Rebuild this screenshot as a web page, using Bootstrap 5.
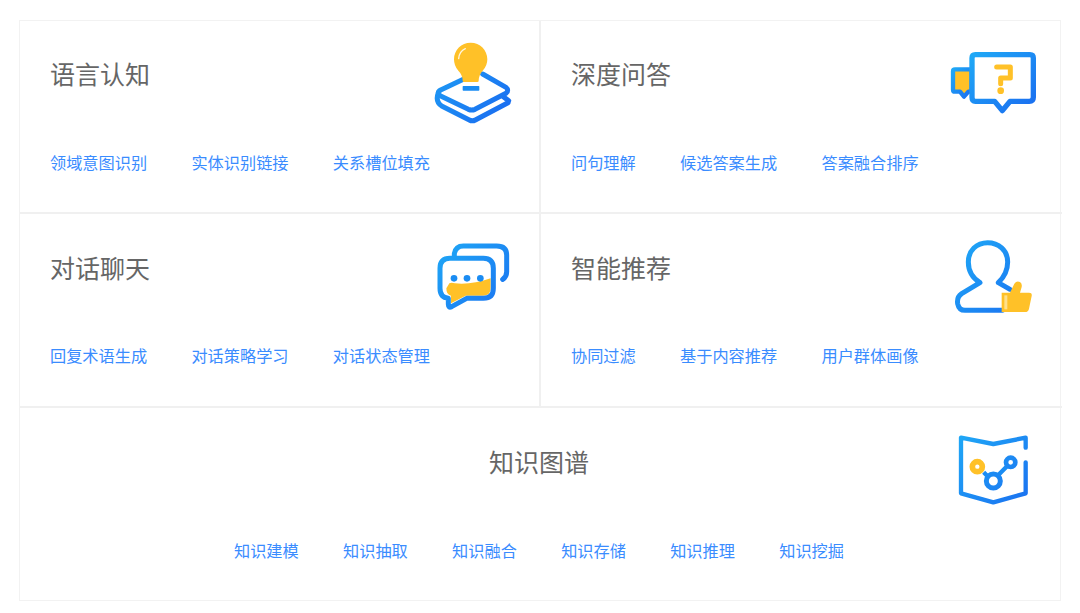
<!DOCTYPE html>
<html lang="zh">
<head>
<meta charset="utf-8">
<title>能力</title>
<link href="https://cdn.jsdelivr.net/npm/bootstrap@5.3.0/dist/css/bootstrap.min.css" rel="stylesheet">
<style>
html,body{height:100%;background:#fff;overflow:hidden}
body{font-family:"Noto Sans CJK SC",sans-serif;padding:20px 19px 0}
.panel-grid{width:1042px;height:581px;border:1px solid #f2f2f2;display:grid;grid-template-columns:521px 521px;grid-template-rows:193px 194px 194px}
.cell-item{position:relative;padding:36px 30px 0;border-bottom:2px solid #f0f0f0}
.cell-item.top-row{padding-top:35px}
.cell-item.left-col{border-right:2px solid #f0f0f0}
.cell-item.wide{grid-column:1 / 3;border-bottom:0;text-align:center;padding-left:28px;padding-right:32px}
.cell-title{font-size:25px;line-height:34px;color:#666;margin:0;font-weight:400}
.link-row{margin-top:59px;gap:44.3px;line-height:24px}
.top-row .link-row,.wide .link-row{margin-top:60px}
.wide .link-row{justify-content:center}
.link-row a{font-size:16.2px;color:#3a8cff;text-decoration:none}
.art{position:absolute}
</style>
</head>
<body>
<svg width="0" height="0" class="d-block" aria-hidden="true"><defs>
<linearGradient id="bl" x1="0" y1="0" x2="1" y2="1"><stop offset="0" stop-color="#1fa8f6"/><stop offset="1" stop-color="#1a6df0"/></linearGradient>
<linearGradient id="blu" gradientUnits="userSpaceOnUse" x1="40" y1="30" x2="270" y2="240"><stop offset="0" stop-color="#1fa8f6"/><stop offset="1" stop-color="#1a6df0"/></linearGradient>
</defs></svg>
<div class="panel-grid">
  <div class="cell-item left-col top-row">
    <h5 class="cell-title">语言认知</h5>
    <div class="d-flex link-row"><a href="#">领域意图识别</a><a href="#">实体识别链接</a><a href="#">关系槽位填充</a></div>
    <svg class="art" style="left:400px;top:9px" width="110" height="110" viewBox="0 0 330 330">
      <g fill="none" stroke="url(#blu)" stroke-width="15" stroke-linejoin="round" stroke-linecap="round">
        <path d="M130 148 L62 180 Q48 188 62 198 L145 238 Q155 242 165 238 L258 190 Q268 180 258 172 L188 132"/>
        <path d="M55 188 Q45 215 65 228 L148 270 Q157 275 166 270 L264 218"/>
        <path d="M250 200 L266 212"/>
      </g>
      <path d="M128 152 Q128 135 115 122 Q102 108 102 88 C102 60 124 38 152 38 C180 38 202 60 202 88 Q202 108 188 122 Q176 135 176 152 Q176 156 172 156 L132 156 Q128 156 128 152Z" fill="#ffc128"/>
      <path d="M136 56 Q118 64 116 86" fill="none" stroke="#fff" stroke-width="4" stroke-linecap="round" opacity=".85"/>
      <rect x="128" y="168" width="50" height="14" rx="2" fill="#1a8cf3"/>
    </svg>
  </div>
  <div class="cell-item top-row">
    <h5 class="cell-title">深度问答</h5>
    <div class="d-flex link-row"><a href="#">问句理解</a><a href="#">候选答案生成</a><a href="#">答案融合排序</a></div>
    <svg class="art" style="left:399px;top:19px" width="110" height="80" viewBox="0 0 330 240">
      <path d="M45 88 H95 V155 H85 L72 170 L60 155 H45 Q39 155 39 149 V94 Q39 88 45 88Z" fill="#ffc128" stroke="url(#bl)" stroke-width="13" stroke-linejoin="round"/>
      <path d="M106 44 H270 Q280 44 280 54 V172 Q280 184 268 184 H210 L187 212 L164 184 H106 Q96 184 96 172 V54 Q96 44 106 44Z" fill="#fff" stroke="url(#bl)" stroke-width="16" stroke-linejoin="round"/>
      <path d="M170 81 H211 V114 H182 V131" fill="none" stroke="#ffc128" stroke-width="15" stroke-linecap="round" stroke-linejoin="round"/>
      <circle cx="182" cy="152" r="10" fill="#ffc128"/>
    </svg>
  </div>
  <div class="cell-item left-col">
    <h5 class="cell-title">对话聊天</h5>
    <div class="d-flex link-row"><a href="#">回复术语生成</a><a href="#">对话策略学习</a><a href="#">对话状态管理</a></div>
    <svg class="art" style="left:405px;top:21px" width="95" height="80" viewBox="0 0 285 240">
      <path d="M88 62 V56 Q92 33 115 33 H215 Q245 33 245 60 V110 Q245 125 233 133" fill="none" stroke="url(#blu)" stroke-width="15" stroke-linecap="round" stroke-linejoin="round"/>
      <path d="M70 150 Q72 140 90 145 Q140 150 197 130 V160 Q197 182 175 182 H122 L78 205 V182 Q64 180 64 160Z" fill="#ffc128"/>
      <path d="M75 70 H175 Q205 70 205 100 V160 Q205 190 175 190 H125 L80 215 Q70 220 70 208 V190 Q45 188 45 160 V100 Q45 70 75 70Z" fill="none" stroke="url(#blu)" stroke-width="15" stroke-linejoin="round"/>
      <circle cx="87" cy="130" r="10" fill="#1a8cf3"/><circle cx="126" cy="130" r="10" fill="#1a8cf3"/><circle cx="166" cy="130" r="10" fill="#1a8cf3"/>
    </svg>
  </div>
  <div class="cell-item">
    <h5 class="cell-title">智能推荐</h5>
    <div class="d-flex link-row"><a href="#">协同过滤</a><a href="#">基于内容推荐</a><a href="#">用户群体画像</a></div>
    <svg class="art" style="left:404px;top:18px" width="95" height="90" viewBox="0 0 285 270">
      <path d="M172 235 H60 Q42 235 38 215 Q35 195 50 185 L105 152 Q70 130 70 90 C70 55 95 32 128 32 C160 32 188 55 188 90 Q188 125 160 152 L195 172" fill="none" stroke="url(#blu)" stroke-width="15" stroke-linecap="round" stroke-linejoin="round"/>
      <path d="M170 182 H195 L208 155 Q215 145 225 150 Q232 155 230 165 L225 182 H252 Q262 182 260 192 L252 230 Q250 240 240 240 H170Z" fill="#ffc128"/>
      <rect x="178" y="190" width="9" height="42" fill="#ffe08a"/>
    </svg>
  </div>
  <div class="cell-item wide">
    <h5 class="cell-title">知识图谱</h5>
    <div class="d-flex link-row"><a href="#">知识建模</a><a href="#">知识抽取</a><a href="#">知识融合</a><a href="#">知识存储</a><a href="#">知识推理</a><a href="#">知识挖掘</a></div>
    <svg class="art" style="left:925px;top:17px" width="95" height="90" viewBox="0 0 285 270">
      <path d="M242 68 V38 L145 57 L48 38 V205 L145 232 L242 205 V112" fill="none" stroke="url(#blu)" stroke-width="13" stroke-linecap="round" stroke-linejoin="round"/>
      <path d="M116 142 L130 156 M160 150 L186 124" stroke="#1a8cf3" stroke-width="13"/>
      <circle cx="145" cy="168" r="21" fill="#fff" stroke="url(#blu)" stroke-width="15"/>
      <circle cx="197" cy="112" r="14" fill="#fff" stroke="url(#blu)" stroke-width="14"/>
      <circle cx="97" cy="125" r="15" fill="#fff" stroke="#ffc128" stroke-width="17"/>
    </svg>
  </div>
</div>
<script src="https://cdn.jsdelivr.net/npm/bootstrap@5.3.0/dist/js/bootstrap.bundle.min.js"></script>
</body>
</html>
